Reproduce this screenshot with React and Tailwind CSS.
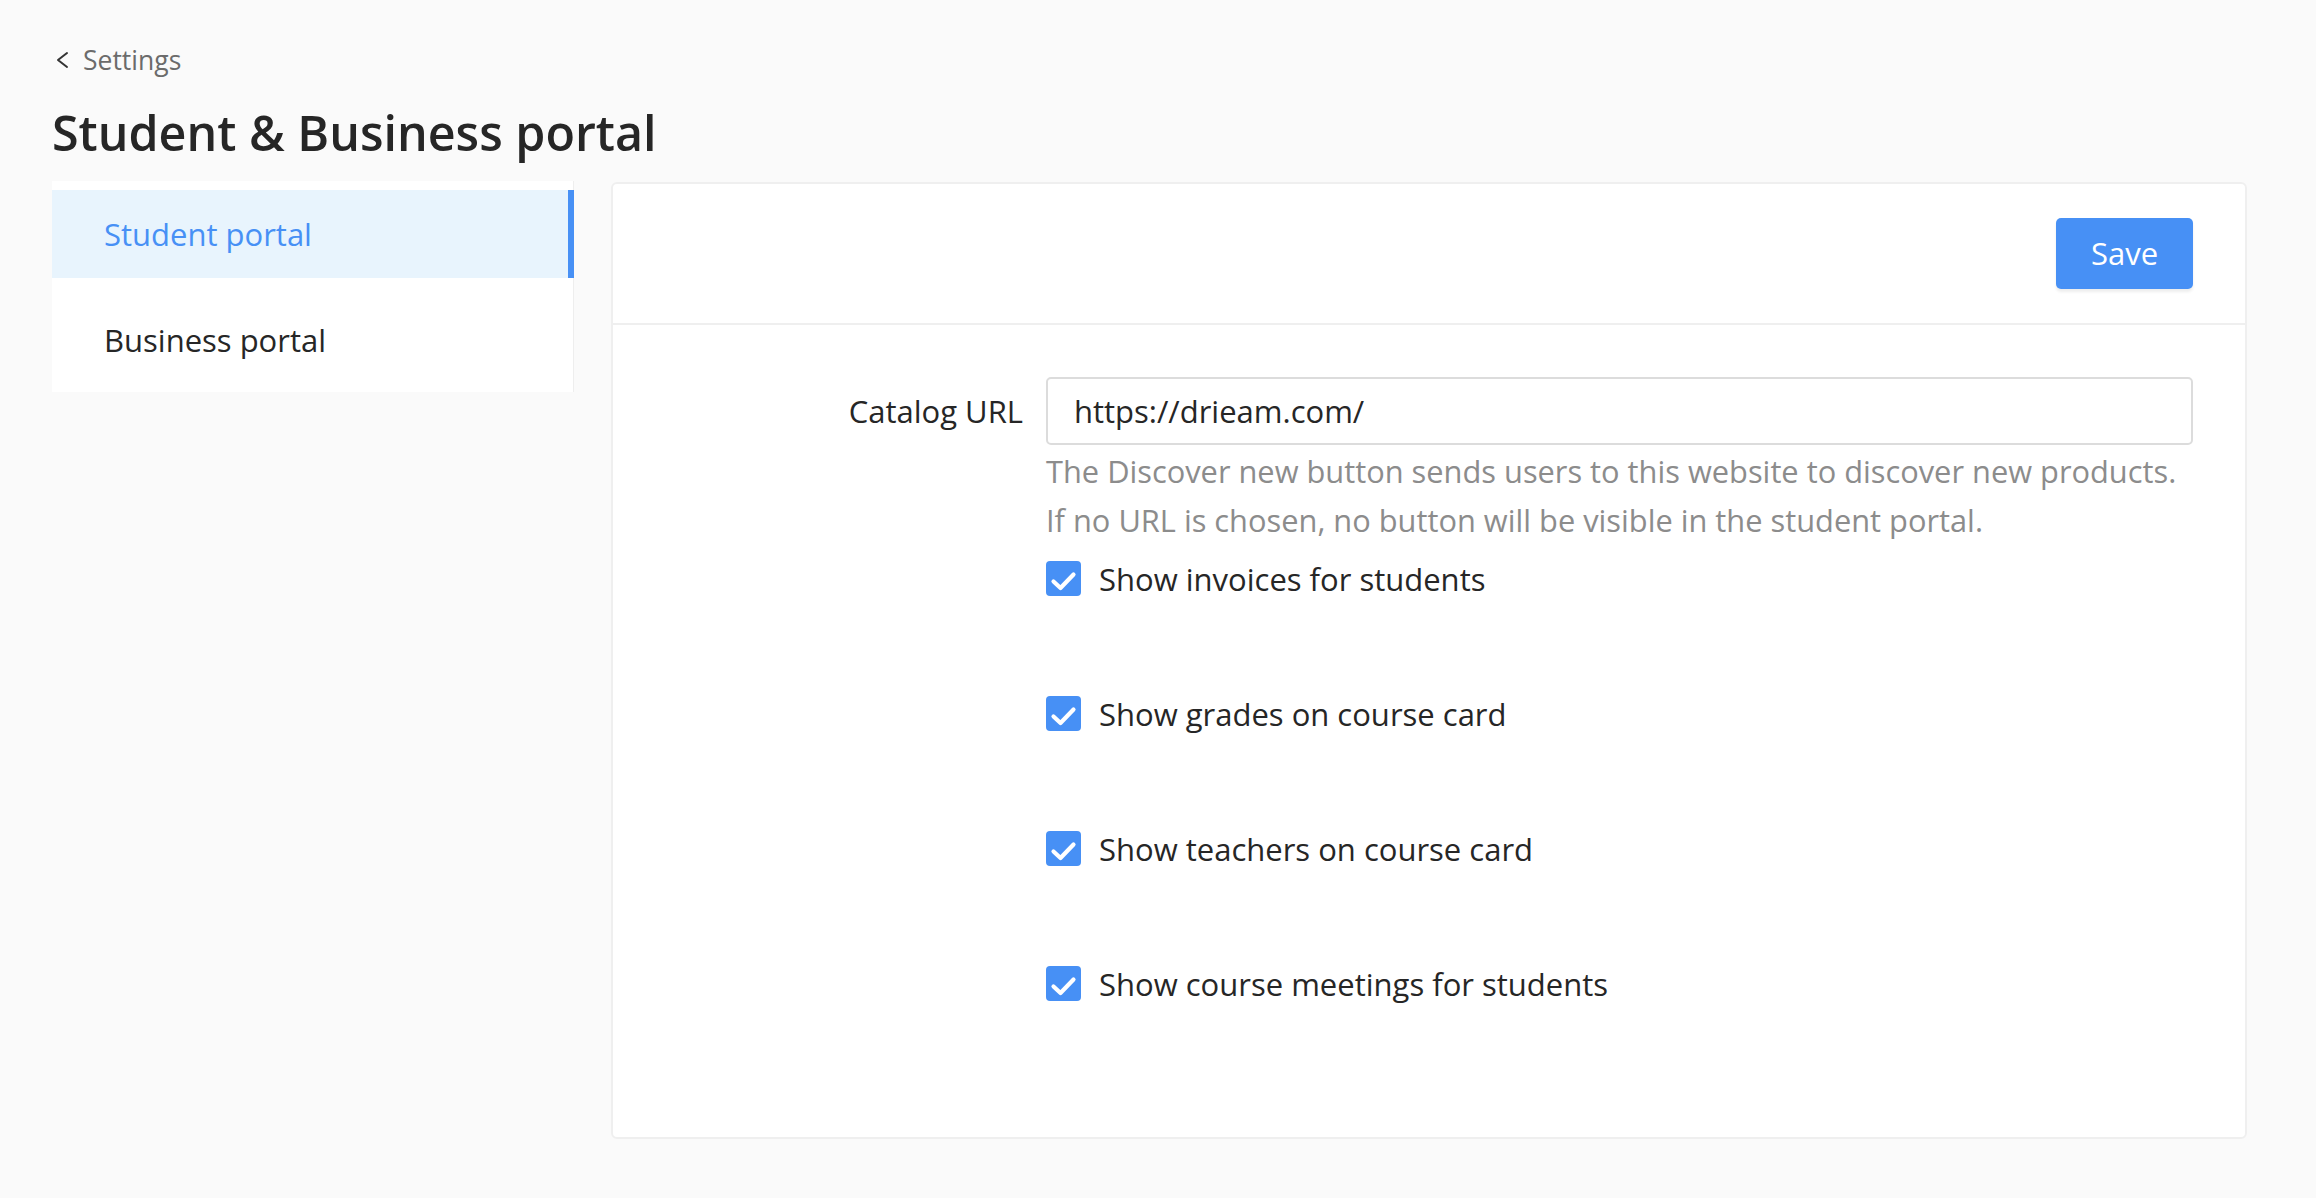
import React from "react";

const font = { fontFamily: '"Open Sans", "Noto Sans", sans-serif' };

function Check({ label }) {
  return (
    <div className="flex items-center h-[35px]">
      <span className="w-[35px] h-[35px] rounded-[4px] bg-[#4790f5] flex items-center justify-center shrink-0">
        <svg width="35" height="35" viewBox="0 0 35 35">
          <polyline points="7.5,20.5 14.5,27 27.5,13.5" fill="none" stroke="#fff" strokeWidth="4.2" strokeLinecap="round" strokeLinejoin="round" />
        </svg>
      </span>
      <span className="ml-[18px] text-[31px] leading-[40px] text-[#262626]">{label}</span>
    </div>
  );
}

export default function App() {
  return (
    <div className="min-h-screen bg-[#fafafa] pl-[52px]" style={font}>
      <div className="pt-[40px]">
        <div className="flex items-center h-[40px] text-[26.5px] leading-[40px] text-[#6b6b6b]">
          <svg width="16" height="20" viewBox="0 0 16 20" className="ml-[3px] mr-[12px]">
            <polyline points="12,3 3,10 12,17" fill="none" stroke="#333" strokeWidth="2" strokeLinecap="round" strokeLinejoin="round" />
          </svg>
          <span>Settings</span>
        </div>
      </div>
      <h1 className="mt-[20px] text-[48.4px] leading-[64px] font-semibold text-[#262626]">Student &amp; Business portal</h1>
      <div className="mt-[17px] flex items-start">
        <div className="w-[522px] bg-white pt-[9px] pb-[8px] border-r border-[#eeeeee] shrink-0">
          <div className="h-[88px] bg-[#e8f4fd] border-r-[6px] border-[#4790f5] -mr-px flex items-center pl-[52px] text-[31px] text-[#4790f5]">
            Student portal
          </div>
          <div className="mt-[18px] h-[88px] flex items-center pl-[52px] text-[31px] text-[#262626]">
            Business portal
          </div>
        </div>
        <div className="ml-[37px] w-[1636px] mt-px bg-white border-2 border-[#efefef] rounded-[6px]">
          <div className="flex justify-end pt-[34px] pb-[34px] pr-[52px] border-b-2 border-[#efefef]">
            <button className="w-[137px] h-[71px] rounded-[5px] bg-[#4790f5] text-white text-[31px] shadow-[0_3px_3px_rgba(0,0,0,0.07)]">
              Save
            </button>
          </div>
          <div className="pt-[52px] pb-[136px] pr-[52px]">
            <div className="flex items-center">
              <div className="w-[433px] pr-[23px] text-right text-[31px] text-[#262626] shrink-0">Catalog URL</div>
              <div className="flex-1 h-[68px] border-2 border-[#dcdcdc] rounded-[5px] flex items-center pl-[26px] text-[31px] text-[#262626]">
                https://drieam.com/
              </div>
            </div>
            <div className="ml-[433px] mt-[2px] text-[30.8px] leading-[49px] text-[#8c8c8c]">
              <div>The Discover new button sends users to this website to discover new products.</div>
              <div>If no URL is chosen, no button will be visible in the student portal.</div>
            </div>
            <div className="ml-[433px] mt-[16px] flex flex-col gap-[100px]">
              <Check label="Show invoices for students" />
              <Check label="Show grades on course card" />
              <Check label="Show teachers on course card" />
              <Check label="Show course meetings for students" />
            </div>
          </div>
        </div>
      </div>
    </div>
  );
}
